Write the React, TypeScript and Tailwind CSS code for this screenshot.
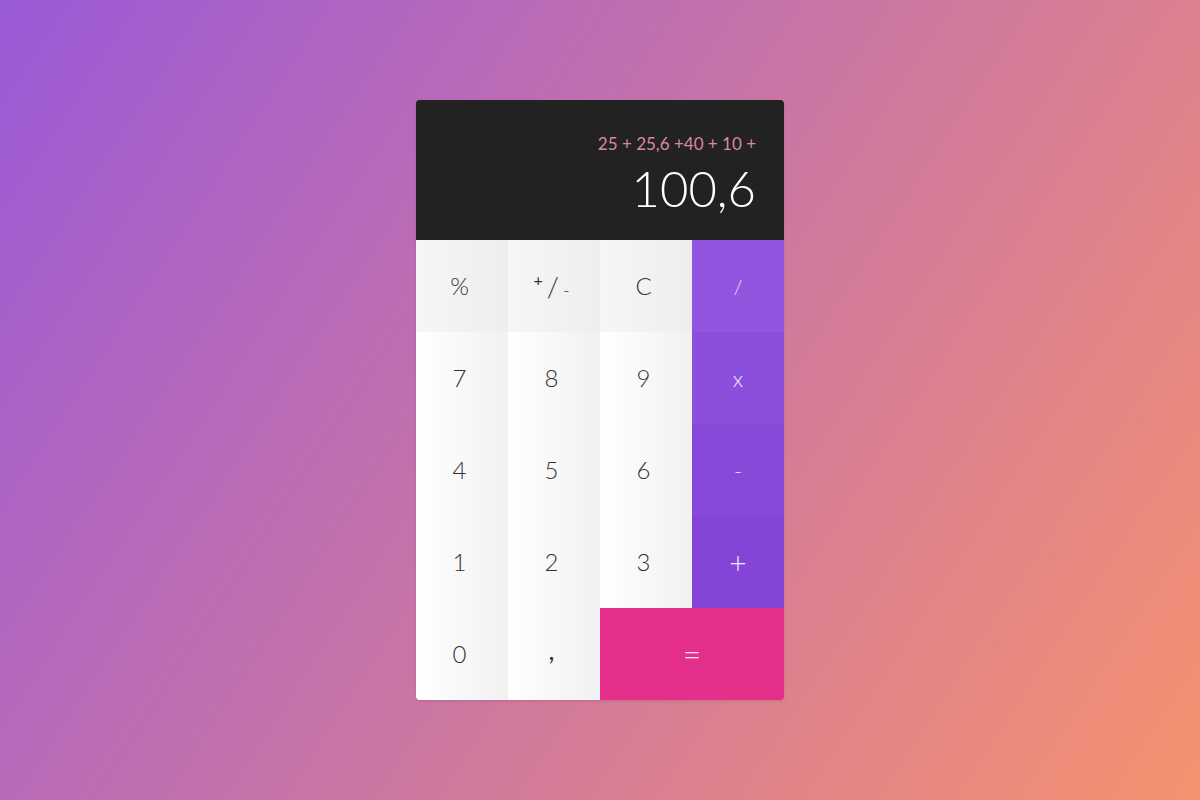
import React from 'react';

const numBtn = 'flex items-center justify-center pr-[5px] bg-gradient-to-r from-white to-[#f1f1f1] text-[#333]';
const topBtn = 'flex items-center justify-center pr-[5px] bg-gradient-to-r from-[#f6f6f6] to-[#eeeeee] text-[#333]';

export default function App() {
  return (
    <div
      className="w-[1200px] h-[800px] flex items-center justify-center bg-[linear-gradient(123deg,#9a59d7_0%,#c673a9_45%,#f5926f_100%)]"
      style={{ fontFamily: 'Lato, "Open Sans", sans-serif' }}
    >
      <div className="w-[368px] rounded-[4px] overflow-hidden shadow-sm">
        {/* display */}
        <div className="h-[140px] bg-[#222222] flex flex-col items-end pr-[28px] pt-[35px]">
          <div className="text-[17px] leading-none text-[#d9899c]">25 + 25,6 +40 + 10 +</div>
          <div className="mt-[12px] text-[49px] leading-none font-light text-white">100,6</div>
        </div>

        {/* keypad */}
        <div className="grid grid-cols-4 auto-rows-[92px] text-[24px] font-light">
          <div className={topBtn}>%</div>
          <div className={topBtn}>
            <span className="flex items-center gap-[4px]">
              <span className="text-[16px] -mt-[12px] font-normal">+</span>
              <span className="text-[28px]">/</span>
              <span className="text-[18px] mt-[8px]">-</span>
            </span>
          </div>
          <div className={topBtn}>C</div>
          <div className="flex items-center justify-center bg-[#9155e0] text-white/80 text-[20px]">/</div>

          <div className={numBtn}>7</div>
          <div className={numBtn}>8</div>
          <div className={numBtn}>9</div>
          <div className="flex items-center justify-center bg-[#8b4fdc] text-white/90 text-[22px]">x</div>

          <div className={numBtn}>4</div>
          <div className={numBtn}>5</div>
          <div className={numBtn}>6</div>
          <div className="flex items-center justify-center bg-[#8749d8] text-white/80 text-[22px]">-</div>

          <div className={numBtn}>1</div>
          <div className={numBtn}>2</div>
          <div className={numBtn}>3</div>
          <div className="flex items-center justify-center bg-[#8444d6] text-white/90 text-[30px]">+</div>

          <div className={numBtn}>0</div>
          <div className={numBtn}>
            <span className="-mt-[8px] text-[26px] font-normal">,</span>
          </div>
          <div className="col-span-2 flex items-center justify-center bg-[#e4308a] text-white/85 text-[32px]">=</div>
        </div>
      </div>
    </div>
  );
}
